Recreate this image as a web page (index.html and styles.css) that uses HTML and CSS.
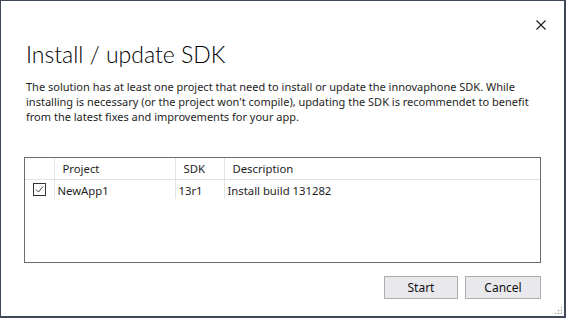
FILE: index.html
```html
<!DOCTYPE html>
<html lang="en">
<head>
    <meta charset="UTF-8">
    <title>Install / update SDK</title>
    <link rel="stylesheet" href="styles.css">
</head>
<body>
    <div class="window">
        <div class="titlebar">
            <button class="close" title="Close">
                <svg width="10" height="10" viewBox="0 0 10 10"><path d="M0.5 0.5 L9.5 9.5 M9.5 0.5 L0.5 9.5" stroke="#1a1a1a" stroke-width="1.1" fill="none"/></svg>
            </button>
        </div>
        <div class="content">
            <h1 class="title">Install / update SDK</h1>
            <p class="info">The solution has at least one project that need to install or update the innovaphone SDK. While installing is necessary (or the project won't compile), updating the SDK is recommendet to benefit from the latest fixes and improvements for your app.</p>

            <div class="grid">
                <table>
                    <colgroup>
                        <col class="col-check">
                        <col class="col-project">
                        <col class="col-sdk">
                        <col>
                    </colgroup>
                    <thead>
                        <tr>
                            <th></th>
                            <th>Project</th>
                            <th>SDK</th>
                            <th>Description</th>
                        </tr>
                    </thead>
                    <tbody>
                        <tr>
                            <td class="check-cell"><span class="checkbox">
                                <svg width="11" height="11" viewBox="0 0 11 11"><path d="M2 5.5 L4.5 8 L9 2.5" stroke="#444" stroke-width="1" fill="none"/></svg>
                            </span></td>
                            <td>NewApp1</td>
                            <td>13r1</td>
                            <td>Install build 131282</td>
                        </tr>
                    </tbody>
                </table>
            </div>

            <div class="actions">
                <button class="btn">Start</button>
                <button class="btn">Cancel</button>
            </div>
        </div>
        <div class="grip"></div>
    </div>
</body>
</html>
```

FILE: styles.css
```css
* {
    margin: 0;
    padding: 0;
    box-sizing: border-box;
}

body {
    background: #ffffff;
    font-family: 'Noto Sans', 'Open Sans', sans-serif;
    font-size: 11.3px;
    color: #1e1e1e;
}

.window {
    position: relative;
    width: 566px;
    height: 318px;
    border: 1px solid #3f4856;
    border-bottom-width: 2px;
    border-right-width: 2px;
    background: #ffffff;
}

.titlebar {
    height: 38px;
    display: flex;
    justify-content: flex-end;
    padding: 19px 18px 0 0;
}

.close {
    border: none;
    background: none;
    width: 10px;
    height: 10px;
    display: block;
}

.close svg {
    display: block;
}

.content {
    padding: 0 23px 0 23px;
}

.title {
    font-family: 'Lato', 'Noto Sans', sans-serif;
    font-weight: 300;
    font-size: 23px;
    line-height: 30px;
    color: #000;
    margin-left: 2px;
}

.info {
    margin: 10px 0 0 2px;
    font-size: 11px;
    line-height: 15px;
    width: 514px;
}

.grid {
    margin-top: 33px;
    height: 106px;
    border: 1px solid #6b6b6b;
}

table {
    width: 100%;
    border-collapse: collapse;
    table-layout: fixed;
}

.col-check {
    width: 29px;
}

.col-project {
    width: 121px;
}

.col-sdk {
    width: 49px;
}

th, td {
    text-align: left;
    font-weight: normal;
    height: 20px;
    padding: 0 3px;
    border-left: 1px solid #e3e3e3;
    white-space: nowrap;
}

th {
    height: 21px;
    padding-top: 1px;
    padding-left: 8px;
    border-bottom: 1px solid #e3e3e3;
}

td {
    padding-top: 2px;
}

th:first-child, td:first-child {
    border-left: none;
}

.check-cell {
    padding: 1px 0 0 8px;
}

.checkbox {
    display: flex;
    align-items: center;
    justify-content: center;
    width: 13px;
    height: 13px;
    border: 1px solid #333;
}

.checkbox svg {
    display: block;
}

.actions {
    display: flex;
    justify-content: flex-end;
    gap: 7px;
    margin-top: 13px;
}

.btn {
    font-family: inherit;
    font-size: 12px;
    color: #111;
    height: 23px;
    width: 74px;
    background: #e9e9ed;
    border: 1px solid #adadad;
}

.btn + .btn {
    width: 76px;
}

.grip {
    position: absolute;
    right: 2px;
    bottom: 2px;
    width: 8px;
    height: 8px;
    background:
        radial-gradient(circle, #b5b5b5 0.9px, transparent 1.1px) 0 0 / 3px 3px;
    clip-path: polygon(100% 0, 100% 100%, 0 100%);
}
```
